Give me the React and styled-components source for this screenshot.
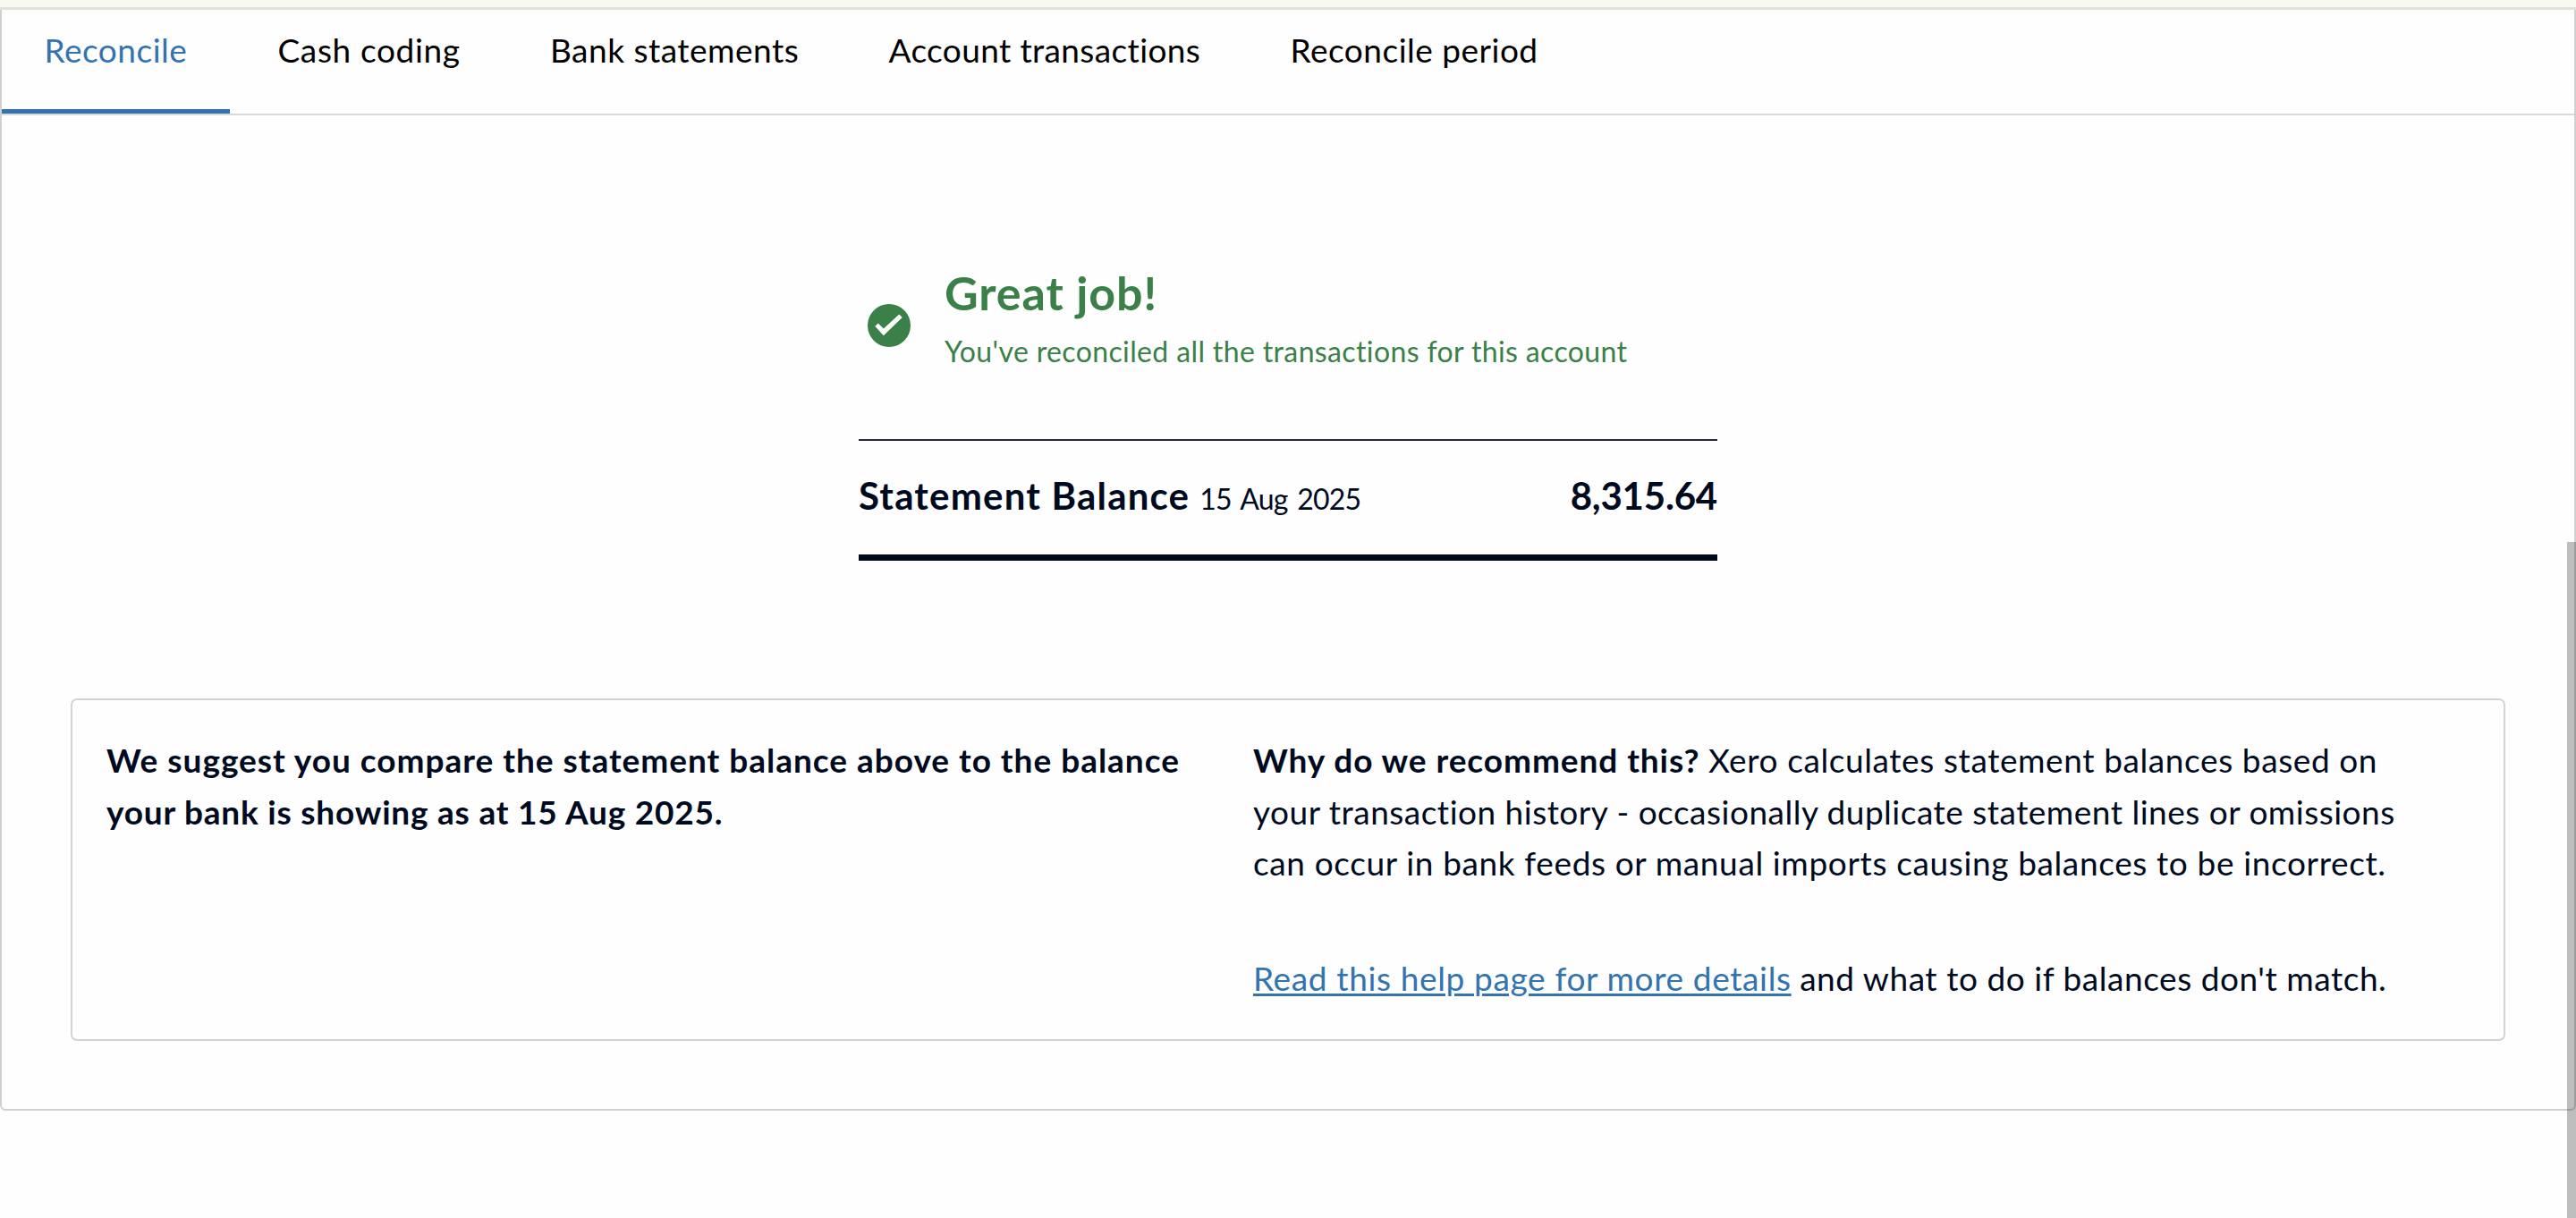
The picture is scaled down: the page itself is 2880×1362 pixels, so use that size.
import styled, { createGlobalStyle } from "styled-components";

const GlobalStyle = createGlobalStyle`
	* {
		box-sizing: border-box;
	}
	body {
		margin: 0;
		background: #fff;
		color: #000a1e;
		font-family: Lato, "Noto Sans", sans-serif;
		overflow: hidden;
	}
`;
const Page = styled.div`
	position: relative;
	height: 1362px;
	overflow: hidden;
	background: #fefefe;
`;
const TopStrip = styled.div`
	height: 11px;
	background: #f8f9f0;
	border-bottom: 3px solid #e1e3da;
`;
const Panel = styled.main`
	height: 1231px;
	border: 2px solid #d0d0d4;
	border-top: none;
	border-radius: 0 0 6px 6px;
`;
const Tabs = styled.nav`
	display: flex;
	height: 118px;
	border-bottom: 2px solid #d7d9da;
`;
const Tab = styled.a`
	height: 116px;
	padding: 21px 0 0 ${(p) => p.$pad || 53.5}px;
	width: ${(p) => p.$width}px;
	border-bottom: ${(p) => (p.$active ? "5px solid #3373b0" : "none")};
	color: ${(p) => (p.$active ? "#3373b0" : "#000")};
	font-size: 37px;
	line-height: 48px;
	letter-spacing: ${(p) => p.$track}px;
	white-space: nowrap;
`;
const Summary = styled.section`
	width: 960px;
	margin: 157px auto 0;
`;
const Success = styled.div`
	display: flex;
	align-items: center;
	height: 156px;
	margin-bottom: 49px;
	padding-left: 10px;
	color: #3a8048;
`;
const CheckIcon = styled.svg`
	width: 48px;
	height: 48px;
	margin-right: 38px;
`;
const Message = styled.div`
	margin-bottom: 19px;
`;
const Heading = styled.h1`
	margin: 0 0 6px;
	font-size: 52px;
	font-weight: 700;
	line-height: 70px;
	letter-spacing: 0.9px;
`;
const SubHeading = styled.p`
	margin: 0;
	font-size: 32px;
	line-height: 50px;
	letter-spacing: 0.37px;
	white-space: nowrap;
`;
const Balance = styled.div`
	display: flex;
	align-items: baseline;
	height: 136px;
	padding-top: 35px;
	border-top: 2px solid #252b38;
	border-bottom: 7px solid #000a1e;
	line-height: 52px;
`;
const BalanceLabel = styled.strong`
	font-size: 42px;
	letter-spacing: 1.2px;
`;
const BalanceDate = styled.span`
	margin-left: 11px;
	font-size: 32px;
	letter-spacing: -0.75px;
	word-spacing: 3px;
`;
const Amount = styled.strong`
	margin-left: auto;
	font-size: 42px;
	letter-spacing: -0.2px;
`;
const Advice = styled.section`
	display: grid;
	grid-template-columns: 1282px 1fr;
	width: 2722px;
	height: 383px;
	margin: 154px 0 0 77px;
	padding: 38px 0 0 38px;
	border: 2px solid #d2d3d5;
	border-radius: 7px;
`;
const Paragraph = styled.p`
	margin: 0 0 71px;
	font-size: 37px;
	line-height: 57.7px;
	white-space: nowrap;
`;
const Track = styled.span`
	letter-spacing: ${(p) => p.$by}px;
`;
const Bold = styled.strong`
	font-weight: 700;
	letter-spacing: ${(p) => p.$by}px;
`;
const Link = styled.a`
	color: #3373b0;
	text-decoration: underline;
	text-decoration-thickness: 3px;
	text-underline-offset: 3px;
	letter-spacing: ${(p) => p.$by}px;
`;
const Scrollbar = styled.div`
	position: absolute;
	top: 606px;
	right: 0;
	bottom: 0;
	width: 10px;
	background: rgba(0, 0, 0, 0.25);
`;

const tabs = [
	{ label: "Reconcile", width: 255, pad: 47.5, track: 0.5, active: true },
	{ label: "Cash coding", width: 304.5, track: 0.65 },
	{ label: "Bank statements", width: 378.5, track: 0.5 },
	{ label: "Account transactions", width: 449, track: 0.37 },
	{ label: "Reconcile period", width: 377, track: 0.5 },
];

function App() {
	return (
		<>
			<GlobalStyle />
			<Page>
				<TopStrip />
				<Panel>
					<Tabs>
						{tabs.map((tab) => (
							<Tab
								key={tab.label}
								$active={tab.active}
								$width={tab.width}
								$pad={tab.pad}
								$track={tab.track}
							>
								{tab.label}
							</Tab>
						))}
					</Tabs>
					<Summary>
						<Success>
							<CheckIcon viewBox="0 0 48 48">
								<circle cx="24" cy="24" r="24" fill="#3a8048" />
								<path
									d="M8.3 24.8l3.5-3.3 6 6 17.5-16 3.4 3.5-20.9 20.3z"
									fill="#fff"
								/>
							</CheckIcon>
							<Message>
								<Heading>Great job!</Heading>
								<SubHeading>
									You've reconciled all the transactions for this account
								</SubHeading>
							</Message>
						</Success>
						<Balance>
							<BalanceLabel>Statement Balance</BalanceLabel>
							<BalanceDate>15 Aug 2025</BalanceDate>
							<Amount>8,315.64</Amount>
						</Balance>
					</Summary>
					<Advice>
						<Paragraph>
							<Bold $by={0.98}>
								We suggest you compare the statement balance above to the balance
							</Bold>
							<br />
							<Bold $by={0.78}>your bank is showing as at 15 Aug 2025.</Bold>
						</Paragraph>
						<div>
							<Paragraph>
								<Bold $by={0.93}>Why do we recommend this?</Bold>{" "}
								<Track $by={0.6}>Xero calculates statement balances based on</Track>
								<br />
								<Track $by={0.5}>
									your transaction history - occasionally duplicate statement
									lines or omissions
								</Track>
								<br />
								<Track $by={0.63}>
									can occur in bank feeds or manual imports causing balances to be
									incorrect.
								</Track>
							</Paragraph>
							<Paragraph>
								<Link $by={0.64}>Read this help page for more details</Link>{" "}
								<Track $by={0.55}>and what to do if balances don't match.</Track>
							</Paragraph>
						</div>
					</Advice>
				</Panel>
				<Scrollbar />
			</Page>
		</>
	);
}

export default App;
